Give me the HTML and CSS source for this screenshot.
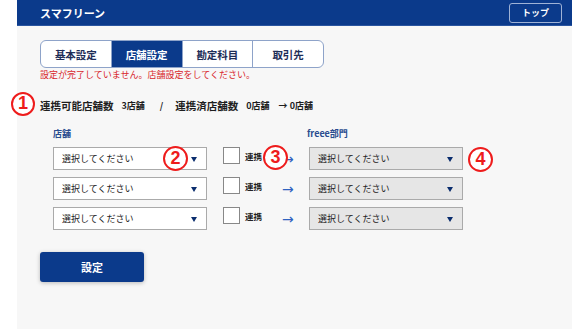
FILE: index.html
```html
<!DOCTYPE html>
<html lang="ja">
<head>
    <meta charset="UTF-8">
    <title>スマフリーン</title>
    <link rel="stylesheet" href="styles.css">
</head>
<body>
<div class="page">
    <div class="gutter"></div>
    <div class="main">
        <header class="topbar">
            <span class="brand">スマフリーン</span>
            <span class="top-btn">トップ</span>
        </header>
        <div class="content">
            <ul class="tabs">
                <li>基本設定</li>
                <li class="active">店舗設定</li>
                <li>勘定科目</li>
                <li>取引先</li>
            </ul>
            <p class="error">設定が完了していません。店舗設定をしてください。</p>

            <div class="summary">
                <span class="mark mark-1">1</span>
                <span class="label">連携可能店舗数</span>
                <span class="num">3店舗</span>
                <span class="slash">/</span>
                <span class="label">連携済店舗数</span>
                <span class="num">0店舗</span>
                <span class="num">→ 0店舗</span>
            </div>

            <div class="mapping">
                <div class="row head">
                    <span class="col-label">店舗</span>
                    <span></span>
                    <span></span>
                    <span class="col-label">freee部門</span>
                </div>
                <div class="row">
                    <div class="select">選択してください<i></i></div>
                    <label class="link"><span class="box"></span>連携</label>
                    <span class="arrow">→</span>
                    <div class="select gray">選択してください<i></i></div>
                    <span class="mark mark-2">2</span>
                    <span class="mark mark-3">3</span>
                    <span class="mark mark-4">4</span>
                </div>
                <div class="row">
                    <div class="select">選択してください<i></i></div>
                    <label class="link"><span class="box"></span>連携</label>
                    <span class="arrow">→</span>
                    <div class="select gray">選択してください<i></i></div>
                </div>
                <div class="row">
                    <div class="select">選択してください<i></i></div>
                    <label class="link"><span class="box"></span>連携</label>
                    <span class="arrow">→</span>
                    <div class="select gray">選択してください<i></i></div>
                </div>
            </div>

            <button class="submit">設定</button>
        </div>
    </div>
</div>
</body>
</html>
```

FILE: styles.css
```css
*{ padding: 0; margin: 0; box-sizing: border-box;}
body{
    font-family: "Noto Sans CJK JP", "Noto Sans", sans-serif;
    color: #222;
    background: #fff;
}
.page{
    display: flex;
    width: 572px;
    height: 329px;
}
.gutter{
    width: 17px;
    background: #fff;
}
.main{
    flex: 1;
    background: #f7f7f7;
}
.topbar{
    height: 26px;
    background: #0b3a8b;
    display: flex;
    align-items: center;
    justify-content: space-between;
    padding: 0 10px 0 23px;
    border-bottom: 1px solid #2a55a0;
}
.brand{
    color: #fff;
    font-size: 11px;
    font-weight: bold;
}
.top-btn{
    color: #fff;
    font-size: 9px;
    font-weight: bold;
    border: 1px solid #9fb2d6;
    border-radius: 3px;
    width: 53px;
    height: 20px;
    display: flex;
    align-items: center;
    justify-content: center;
}
.content{
    padding: 14px 0 0 23px;
}
.tabs{
    display: flex;
    width: 284px;
    height: 28px;
    border: 1px solid #8ea3c9;
    border-radius: 6px;
    overflow: hidden;
    background: #fff;
}
.tabs li{
    list-style: none;
    flex: 1;
    display: flex;
    align-items: center;
    justify-content: center;
    font-size: 10.5px;
    font-weight: bold;
    color: #1d2d57;
    border-left: 1px solid #8ea3c9;
}
.tabs li:first-child{
    border-left: none;
}
.tabs li.active{
    background: #0b3a8b;
    color: #fff;
}
.error{
    color: #d7262b;
    font-size: 9px;
    line-height: 13px;
    height: 13px;
}
.summary{
    position: relative;
    display: flex;
    align-items: center;
    margin-top: 16px;
    height: 16px;
    font-weight: bold;
    color: #1e1e1e;
}
.summary .label{
    font-size: 10.5px;
    margin-right: 8px;
}
.summary .num{
    font-size: 9px;
    margin-right: 9px;
}
.summary .slash{
    font-size: 9px;
    margin: 0 12px 0 6px;
}
.mark{
    position: absolute;
    width: 25px;
    height: 25px;
    border: 2.5px solid #ee1c1c;
    border-radius: 50%;
    color: #ee1c1c;
    font-family: "Liberation Sans", sans-serif;
    font-weight: bold;
    font-size: 18px;
    line-height: 20px;
    text-align: center;
    background: #fff;
}
.mark-1{ left: -29px; top: -5px; width: 24px; height: 24px; line-height: 19px;}
.mark-2{ left: 110px; top: -1px; background: transparent;}
.mark-3{ left: 210px; top: -2px;}
.mark-4{ left: 415px; top: 0;}
.mapping{
    margin-top: 13px;
    padding-left: 13px;
}
.row{
    position: relative;
    display: grid;
    grid-template-columns: 154px 72px 30px 154px;
    align-items: center;
    height: 23px;
    margin-bottom: 7px;
}
.row.head{
    height: 14px;
    margin-bottom: 7px;
}
.col-label{
    font-size: 9px;
    font-weight: bold;
    color: #2a4d8f;
}
.row.head .col-label:last-child{
    margin-left: -2px;
}
.select{
    position: relative;
    height: 23px;
    border: 1px solid #aaa;
    background: #fff;
    font-size: 9px;
    line-height: 21px;
    padding-left: 8px;
    color: #222;
}
.select i{
    position: absolute;
    right: 9px;
    top: 9px;
    border-left: 3px solid transparent;
    border-right: 3px solid transparent;
    border-top: 5px solid #0b2e6e;
}
.select.gray{
    background: #e6e6e6;
}
.link{
    display: flex;
    align-items: flex-start;
    height: 23px;
    font-size: 8.5px;
    font-weight: bold;
    line-height: 19px;
    padding-left: 16px;
}
.box{
    width: 17px;
    height: 17px;
    border: 1px solid #888;
    background: #fff;
    margin-right: 5px;
}
.arrow{
    color: #2f62c0;
    font-size: 14px;
    line-height: 20px;
    padding-left: 3px;
    font-family: "DejaVu Sans", sans-serif;
}
.submit{
    display: block;
    margin-top: 22px;
    width: 104px;
    height: 30px;
    border: none;
    border-radius: 3px;
    background: #0b3a8b;
    color: #fff;
    font-family: "Noto Sans CJK JP", sans-serif;
    font-size: 11px;
    font-weight: bold;
    box-shadow: 0 1px 4px rgba(0,0,0,.25);
}
```
